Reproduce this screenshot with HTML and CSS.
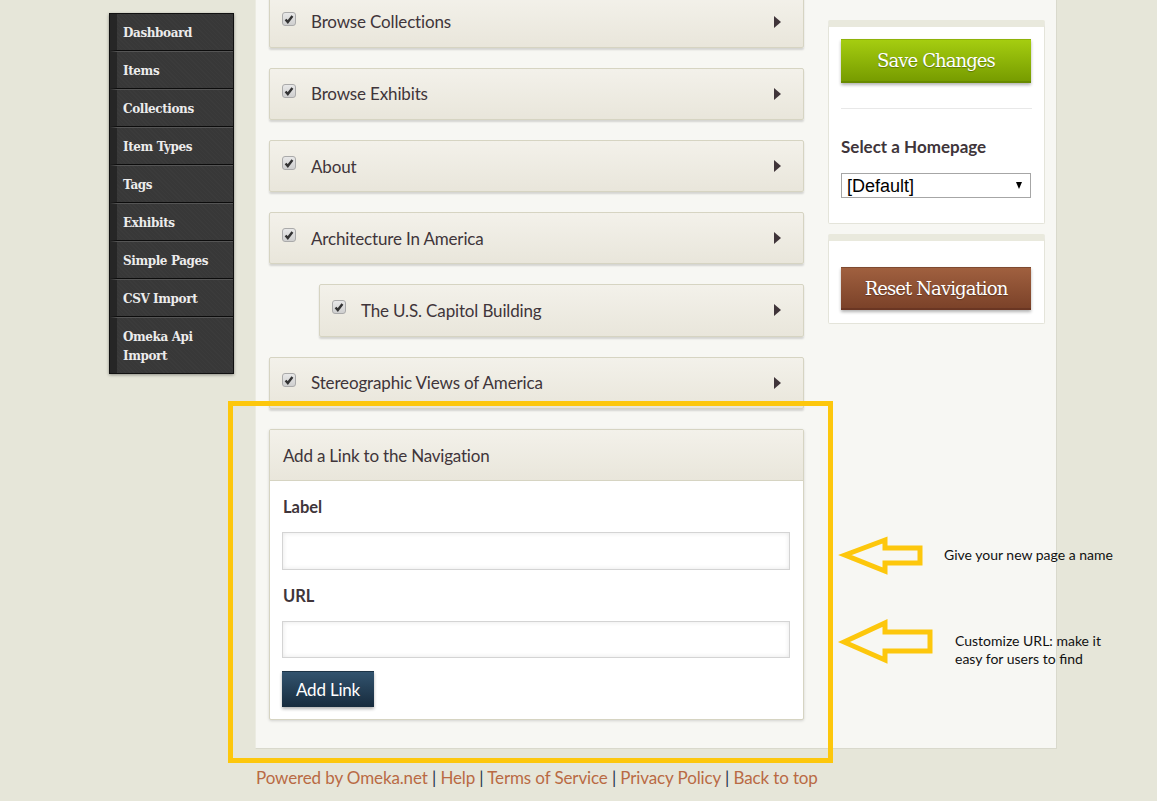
FILE: index.html
```html
<!DOCTYPE html>
<html lang="en">
<head>
  <meta charset="UTF-8" />
  <title>Edit Navigation</title>
  <link rel="stylesheet" href="styles.css">
</head>
<body>

<div class="page">
  <ul class="nav">
    <li><a href="#">Dashboard</a></li>
    <li><a href="#">Items</a></li>
    <li><a href="#">Collections</a></li>
    <li><a href="#">Item Types</a></li>
    <li><a href="#">Tags</a></li>
    <li><a href="#">Exhibits</a></li>
    <li><a href="#">Simple Pages</a></li>
    <li><a href="#">CSV Import</a></li>
    <li><a href="#">Omeka Api Import</a></li>
  </ul>

  <div class="main">
    <div class="content">
      <div class="col-left">
        <div class="rows">
          <div class="row">
            <span class="check"><svg viewBox="0 0 14 14"><path d="M3 7.5 L5.6 10.5 L11 3.5" /></svg></span>
            <span class="row-name">Browse Collections</span>
            <span class="row-arrow"></span>
          </div>
          <div class="row">
            <span class="check"><svg viewBox="0 0 14 14"><path d="M3 7.5 L5.6 10.5 L11 3.5" /></svg></span>
            <span class="row-name">Browse Exhibits</span>
            <span class="row-arrow"></span>
          </div>
          <div class="row">
            <span class="check"><svg viewBox="0 0 14 14"><path d="M3 7.5 L5.6 10.5 L11 3.5" /></svg></span>
            <span class="row-name">About</span>
            <span class="row-arrow"></span>
          </div>
          <div class="row">
            <span class="check"><svg viewBox="0 0 14 14"><path d="M3 7.5 L5.6 10.5 L11 3.5" /></svg></span>
            <span class="row-name">Architecture In America</span>
            <span class="row-arrow"></span>
          </div>
          <div class="row row-child">
            <span class="check"><svg viewBox="0 0 14 14"><path d="M3 7.5 L5.6 10.5 L11 3.5" /></svg></span>
            <span class="row-name">The U.S. Capitol Building</span>
            <span class="row-arrow"></span>
          </div>
          <div class="row">
            <span class="check"><svg viewBox="0 0 14 14"><path d="M3 7.5 L5.6 10.5 L11 3.5" /></svg></span>
            <span class="row-name">Stereographic Views of America</span>
            <span class="row-arrow"></span>
          </div>
        </div>

        <div class="add-link">
          <div class="add-link-head">Add a Link to the Navigation</div>
          <div class="add-link-body">
            <label class="field-label">Label</label>
            <input class="field" type="text">
            <label class="field-label field-label-url">URL</label>
            <input class="field" type="text">
            <button class="btn-add">Add Link</button>
          </div>
        </div>
      </div>

      <div class="col-right">
        <div class="box">
          <button class="btn-big btn-save">Save Changes</button>
          <hr class="box-line">
          <div class="box-title">Select a Homepage</div>
          <div class="select-wrap">
            <select class="home-select">
              <option>[Default]</option>
            </select>
          </div>
        </div>
        <div class="box box-reset">
          <button class="btn-big btn-reset">Reset Navigation</button>
        </div>
      </div>
    </div>

    <div class="footer">
      <a href="#">Powered by Omeka.net</a> | <a href="#">Help</a> | <a href="#">Terms of Service</a> | <a href="#">Privacy Policy</a> | <a href="#">Back to top</a>
    </div>
  </div>
</div>

<!-- annotations drawn over the screenshot -->
<div class="mark-box"></div>
<svg class="mark-arrows" viewBox="0 0 1157 801">
  <polygon points="845,555 885,540 885,548 920,548 920,563 885,563 885,571" />
  <polygon points="844,642 885,623 885,632 930,632 930,651 885,651 885,660" />
</svg>
<div class="note note-name">Give your new page a name</div>
<div class="note note-url">Customize URL: make it<br>easy for users to find</div>

</body>
</html>
```

FILE: styles.css
```css
* {
  box-sizing: border-box;
}

html, body {
  height: 801px;
  overflow: hidden;
}

body {
  margin: 0;
  position: relative;
  background: #e6e6d9;
  font-family: 'Lato', sans-serif;
  color: #40353a;
}

.page {
  display: flex;
  align-items: flex-start;
  padding-left: 109px;
}

/* left nav */
.nav {
  list-style: none;
  margin: 13px 21px 0 0;
  padding: 0;
  width: 125px;
  flex: none;
  background: #3a3a3a;
  border: 1px solid #111;
  box-shadow: 0 1px 3px rgba(0,0,0,0.4);
}

.nav li {
  border-top: 1px solid #555;
  border-bottom: 1px solid #0c0c0c;
  border-left: 7px solid #262626;
  background: repeating-linear-gradient(45deg, #3b3b3b, #3b3b3b 1px, #383838 1px, #383838 3px);
}

.nav li:first-child {
  border-top: 0;
}

.nav li:last-child {
  border-bottom: 0;
}

.nav a {
  display: block;
  padding: 10px 4px 7px 6px;
  font-family: 'DejaVu Serif', serif;
  font-size: 12px;
  font-weight: bold;
  line-height: 19px;
  letter-spacing: -0.4px;
  color: #ececec;
  text-decoration: none;
}

/* main panel */
.main {
  width: 802px;
  flex: none;
}

.content {
  display: flex;
  height: 749px;
  padding: 0 12px 0 13px;
  background: #f7f7f3;
  border-right: 1px solid #d9d9cc;
  border-left: 1px solid #ecece2;
  border-bottom: 1px solid #d9d9cc;
  overflow: hidden;
}

.col-left {
  width: 535px;
  flex: none;
}

.rows {
  margin-top: -4.4px;
}

.row {
  display: flex;
  align-items: center;
  height: 52.2px;
  margin-bottom: 20px;
  padding: 0 22px 0 12px;
  background: linear-gradient(#f3f1ea, #e9e6db);
  border: 1px solid #d6d4c2;
  border-radius: 2px;
  box-shadow: 0 2px 2px rgba(0,0,0,0.14);
  font-size: 17px;
  letter-spacing: -0.15px;
}

.row-child {
  margin-left: 50px;
}

.check {
  width: 14px;
  height: 14px;
  margin: -6px 15px 0 0;
  flex: none;
  background: linear-gradient(#e8e8e8, #cfcfcf);
  border: 1px solid #aaa;
  border-radius: 3px;
}

.check svg {
  display: block;
  width: 12px;
  height: 12px;
}

.check path {
  fill: none;
  stroke: #333;
  stroke-width: 2.8;
}

.row-name {
  flex: 1;
}

.row-arrow {
  width: 0;
  height: 0;
  border-left: 7px solid #40353a;
  border-top: 6px solid transparent;
  border-bottom: 6px solid transparent;
}

/* add link panel */
.add-link {
  background: #fff;
  border: 1px solid #d6d4c2;
  border-radius: 2px;
  box-shadow: 0 1px 3px rgba(0,0,0,0.15);
}

.add-link-head {
  height: 51px;
  padding: 0 13px;
  background: linear-gradient(#f3f1ea, #e9e6db);
  border-bottom: 1px solid #d6d4c2;
  font-size: 17px;
  letter-spacing: -0.2px;
  line-height: 51px;
}

.add-link-body {
  display: flex;
  flex-direction: column;
  align-items: flex-start;
  height: 238px;
  padding: 14px 13px 0 12px;
}

.field-label {
  margin-left: 1px;
  font-size: 16.5px;
  font-weight: bold;
  line-height: 24px;
}

.field-label-url {
  margin-top: 14px;
}

.field {
  width: 508px;
  height: 38px;
  margin-top: 13px;
  border: 1px solid #d4d4d4;
  background: #fff;
  box-shadow: inset 0 0 5px rgba(0,0,0,0.1);
}

.field-label-url + .field {
  height: 37px;
  margin-top: 13px;
}

.btn-add {
  width: 92px;
  height: 36px;
  margin-top: 13px;
  padding: 0;
  background: linear-gradient(#32536e, #172b3d);
  border: 0;
  border-top: 1px solid #1c3346;
  box-shadow: 0 2px 3px rgba(0,0,0,0.3);
  font-family: 'Lato', sans-serif;
  font-size: 17px;
  letter-spacing: -0.2px;
  color: #fff;
}

/* right column */
.col-right {
  width: 217px;
  flex: none;
  margin: 20px 0 0 24px;
}

.box {
  height: 204px;
  margin-bottom: 10px;
  padding: 12px 12px 0 12px;
  background: #fff;
  border: 1px solid #e4e4da;
  border-top: 7px solid #e9e9dd;
  border-radius: 2px;
}

.box-reset {
  height: 90px;
  padding-top: 26px;
}

.btn-big {
  display: block;
  width: 190px;
  height: 44px;
  padding: 0;
  border: 0;
  box-shadow: 0 2px 3px rgba(0,0,0,0.3);
  font-family: 'DejaVu Serif', serif;
  font-size: 18px;
  letter-spacing: -0.9px;
  color: #fff;
  text-shadow: 0 1px 1px rgba(0,0,0,0.3);
}

.btn-save {
  background: linear-gradient(#a5cd10, #779c00);
  border-bottom: 2px solid #688a00;
  border-top: 1px solid #8fb20a;
}

.btn-reset {
  height: 43px;
  background: linear-gradient(#a0603f, #7b4229);
  border-bottom: 2px solid #6a3623;
  border-top: 1px solid #7e4a30;
}

.box-line {
  height: 1px;
  margin: 25px 0 0 0;
  border: 0;
  background: #e8e8e8;
}

.box-title {
  margin-top: 26px;
  font-size: 17px;
  font-weight: bold;
  line-height: 24px;
}

.select-wrap {
  position: relative;
  width: 190px;
  margin-top: 14px;
}

.select-wrap::after {
  content: "";
  position: absolute;
  right: 9px;
  top: 9px;
  border-top: 7px solid #000;
  border-left: 3.5px solid transparent;
  border-right: 3.5px solid transparent;
  pointer-events: none;
}

.home-select {
  display: block;
  width: 100%;
  height: 25px;
  padding: 0 0 0 5px;
  appearance: none;
  background: #fff;
  border: 1px solid #a6a6a6;
  border-radius: 0;
  font-family: 'Liberation Sans', sans-serif;
  font-size: 18px;
  color: #000;
}

/* footer */
.footer {
  margin-top: 18px;
  padding-left: 1px;
  font-size: 17px;
  letter-spacing: -0.12px;
  line-height: 22px;
  color: #24364a;
}

.footer a {
  color: #b96a44;
  text-decoration: none;
}

/* annotations */
.mark-box {
  position: absolute;
  left: 228px;
  top: 401px;
  width: 605px;
  height: 362px;
  border: 5px solid #fdc70c;
}

.mark-arrows {
  position: absolute;
  left: 0;
  top: 0;
  width: 1157px;
  height: 801px;
  pointer-events: none;
}

.mark-arrows polygon {
  fill: none;
  stroke: #fdc70c;
  stroke-width: 5;
}

.note {
  position: absolute;
  font-family: 'Lato', sans-serif;
  font-size: 14px;
  line-height: 18px;
  color: #111;
}

.note-name {
  left: 944px;
  top: 546px;
}

.note-url {
  left: 955px;
  top: 632px;
}
```
